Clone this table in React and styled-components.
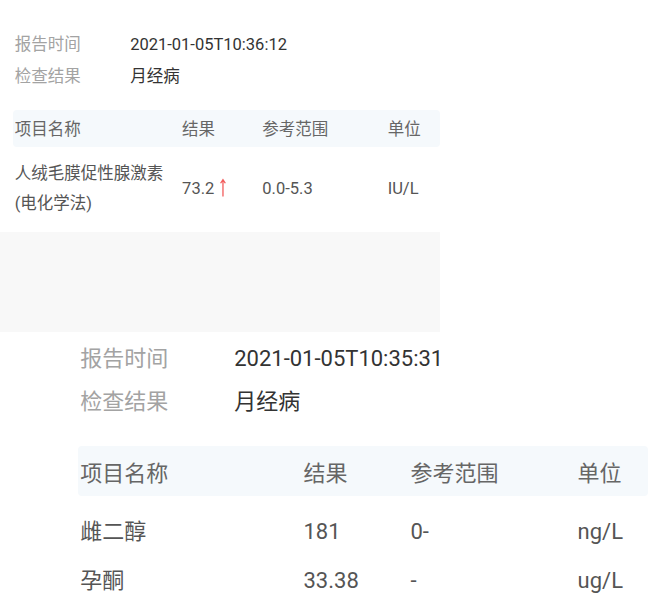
import styled, { createGlobalStyle } from 'styled-components';

const GlobalStyle = createGlobalStyle`
  body {
    margin: 0;
    background: #fff;
    font-family: Roboto, "Noto Sans CJK SC", "Noto Sans", sans-serif;
  }
`;

const reports = [
  {
    id: 'a',
    size: 16.5,
    inset: 13,
    top: 29,
    time: '2021-01-05T10:36:12',
    result: '月经病',
    items: [
      {
        name: '人绒毛膜促性腺激素(电化学法)',
        value: '73.2',
        high: true,
        range: '0.0-5.3',
        unit: 'IU/L',
      },
    ],
  },
  {
    id: 'b',
    size: 22,
    inset: 78,
    top: 6,
    time: '2021-01-05T10:35:31',
    result: '月经病',
    items: [
      { name: '雌二醇', value: '181', range: '0-', unit: 'ng/L' },
      { name: '孕酮', value: '33.38', range: '-', unit: 'ug/L' },
    ],
  },
];

function UpArrow() {
  return (
    <Arrow viewBox="0 0 6 19" aria-label="偏高">
      <path d="M3 1.5V18.5M0.6 5.2L3 1.5L5.4 5.2" fill="none" stroke="#f25b5b" strokeWidth="1.3" />
    </Arrow>
  );
}

function Report({ report }) {
  return (
    <Card $size={report.size} $inset={report.inset} $top={report.top}>
      <InfoRow>
        <Label>报告时间</Label>
        <Value>{report.time}</Value>
      </InfoRow>
      <InfoRow>
        <Label>检查结果</Label>
        <Value>{report.result}</Value>
      </InfoRow>
      <Table>
        <HeadRow>
          <span>项目名称</span>
          <span>结果</span>
          <span>参考范围</span>
          <span>单位</span>
        </HeadRow>
        <TableBody>
          {report.items.map(item => (
            <Row key={item.name}>
              <Name>{item.name}</Name>
              <span>
                {item.value}
                {item.high && <UpArrow />}
              </span>
              <span>{item.range}</span>
              <span>{item.unit}</span>
            </Row>
          ))}
        </TableBody>
      </Table>
    </Card>
  );
}

export default function App() {
  return (
    <>
      <GlobalStyle />
      <Page>
        <Report report={reports[0]} />
        <Blank />
        <Report report={reports[1]} />
      </Page>
    </>
  );
}

const Page = styled.main`
  display: flex;
  flex-direction: column;
  width: 650px;
  overflow: hidden;
`;

const Card = styled.section`
  font-size: ${p => p.$size}px;
  padding: ${p => p.$top}px 0 0 ${p => p.$inset}px;
`;

const InfoRow = styled.div`
  display: grid;
  grid-template-columns: 7em auto;
  line-height: 1.95em;
  padding-left: 0.1em;
`;

const Label = styled.span`
  color: #a3a3a3;
`;

const Value = styled.span`
  color: #333;
`;

const Table = styled.div`
  width: 25.9em;
  margin-top: 1em;
`;

const cols = `
  display: grid;
  grid-template-columns: 10.15em 4.86em 7.6em 1fr;
  align-items: center;
  padding-left: 0.1em;
`;

const HeadRow = styled.div`
  ${cols}
  height: 2.25em;
  background: #f5f9fc;
  border-radius: 4px;
  color: #666;
`;

const TableBody = styled.div`
  padding-top: 0.5em;
  padding-bottom: 0.6em;
`;

const Row = styled.div`
  ${cols}
  padding-top: 0.22em;
  padding-bottom: 0.22em;
  line-height: 1.82em;
  color: #555;
`;

const Name = styled.span`
  padding-right: 1em;
`;

const Arrow = styled.svg`
  width: 0.36em;
  height: 1.15em;
  margin-left: 0.36em;
  vertical-align: -0.2em;
`;

const Blank = styled.div`
  width: 440px;
  height: 100px;
  background: #f8f8f8;
`;
